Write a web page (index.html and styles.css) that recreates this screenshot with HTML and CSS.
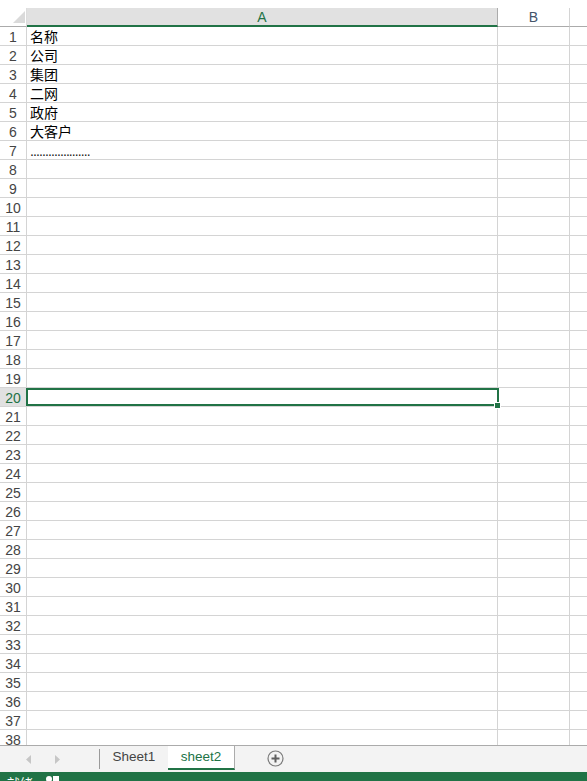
FILE: index.html
```html
<!DOCTYPE html>
<html lang="zh">
<head>
<meta charset="utf-8">
<title>sheet2</title>
<link rel="stylesheet" href="styles.css">
</head>
<body>
<div class="app">
  <div class="sheet">
    <div class="row head">
      <div class="rh corner"><svg class="tri" width="12" height="12" viewBox="0 0 12 12"><polygon points="12,0 12,12 0,12" fill="#dadada"/></svg></div>
      <div class="c a">A</div>
      <div class="c b">B</div>
      <div class="c r"></div>
    </div>
    <div class="row"><div class="rh">1</div><div class="c a">名称</div><div class="c b"></div><div class="c r"></div></div>
    <div class="row"><div class="rh">2</div><div class="c a">公司</div><div class="c b"></div><div class="c r"></div></div>
    <div class="row"><div class="rh">3</div><div class="c a">集团</div><div class="c b"></div><div class="c r"></div></div>
    <div class="row"><div class="rh">4</div><div class="c a">二网</div><div class="c b"></div><div class="c r"></div></div>
    <div class="row"><div class="rh">5</div><div class="c a">政府</div><div class="c b"></div><div class="c r"></div></div>
    <div class="row"><div class="rh">6</div><div class="c a">大客户</div><div class="c b"></div><div class="c r"></div></div>
    <div class="row"><div class="rh">7</div><div class="c a"><span class="dots">....................</span></div><div class="c b"></div><div class="c r"></div></div>
    <div class="row"><div class="rh">8</div><div class="c a"></div><div class="c b"></div><div class="c r"></div></div>
    <div class="row"><div class="rh">9</div><div class="c a"></div><div class="c b"></div><div class="c r"></div></div>
    <div class="row"><div class="rh">10</div><div class="c a"></div><div class="c b"></div><div class="c r"></div></div>
    <div class="row"><div class="rh">11</div><div class="c a"></div><div class="c b"></div><div class="c r"></div></div>
    <div class="row"><div class="rh">12</div><div class="c a"></div><div class="c b"></div><div class="c r"></div></div>
    <div class="row"><div class="rh">13</div><div class="c a"></div><div class="c b"></div><div class="c r"></div></div>
    <div class="row"><div class="rh">14</div><div class="c a"></div><div class="c b"></div><div class="c r"></div></div>
    <div class="row"><div class="rh">15</div><div class="c a"></div><div class="c b"></div><div class="c r"></div></div>
    <div class="row"><div class="rh">16</div><div class="c a"></div><div class="c b"></div><div class="c r"></div></div>
    <div class="row"><div class="rh">17</div><div class="c a"></div><div class="c b"></div><div class="c r"></div></div>
    <div class="row"><div class="rh">18</div><div class="c a"></div><div class="c b"></div><div class="c r"></div></div>
    <div class="row"><div class="rh">19</div><div class="c a"></div><div class="c b"></div><div class="c r"></div></div>
    <div class="row"><div class="rh active">20</div><div class="c a"></div><div class="c b"></div><div class="c r"></div></div>
    <div class="row"><div class="rh">21</div><div class="c a"></div><div class="c b"></div><div class="c r"></div></div>
    <div class="row"><div class="rh">22</div><div class="c a"></div><div class="c b"></div><div class="c r"></div></div>
    <div class="row"><div class="rh">23</div><div class="c a"></div><div class="c b"></div><div class="c r"></div></div>
    <div class="row"><div class="rh">24</div><div class="c a"></div><div class="c b"></div><div class="c r"></div></div>
    <div class="row"><div class="rh">25</div><div class="c a"></div><div class="c b"></div><div class="c r"></div></div>
    <div class="row"><div class="rh">26</div><div class="c a"></div><div class="c b"></div><div class="c r"></div></div>
    <div class="row"><div class="rh">27</div><div class="c a"></div><div class="c b"></div><div class="c r"></div></div>
    <div class="row"><div class="rh">28</div><div class="c a"></div><div class="c b"></div><div class="c r"></div></div>
    <div class="row"><div class="rh">29</div><div class="c a"></div><div class="c b"></div><div class="c r"></div></div>
    <div class="row"><div class="rh">30</div><div class="c a"></div><div class="c b"></div><div class="c r"></div></div>
    <div class="row"><div class="rh">31</div><div class="c a"></div><div class="c b"></div><div class="c r"></div></div>
    <div class="row"><div class="rh">32</div><div class="c a"></div><div class="c b"></div><div class="c r"></div></div>
    <div class="row"><div class="rh">33</div><div class="c a"></div><div class="c b"></div><div class="c r"></div></div>
    <div class="row"><div class="rh">34</div><div class="c a"></div><div class="c b"></div><div class="c r"></div></div>
    <div class="row"><div class="rh">35</div><div class="c a"></div><div class="c b"></div><div class="c r"></div></div>
    <div class="row"><div class="rh">36</div><div class="c a"></div><div class="c b"></div><div class="c r"></div></div>
    <div class="row"><div class="rh">37</div><div class="c a"></div><div class="c b"></div><div class="c r"></div></div>
    <div class="row"><div class="rh">38</div><div class="c a"></div><div class="c b"></div><div class="c r"></div></div>
    <div class="selection"><span class="handle"></span></div>
  </div>
  <div class="tabs">
    <div class="nav">
      <svg class="arrow" width="5" height="9" viewBox="0 0 5 9"><polygon points="5,0 5,9 0,4.5" fill="#c6c6c6"/></svg>
      <svg class="arrow" width="5" height="9" viewBox="0 0 5 9"><polygon points="0,0 0,9 5,4.5" fill="#c6c6c6"/></svg>
    </div>
    <div class="sep"></div>
    <div class="tab">Sheet1</div>
    <div class="tab current">sheet2</div>
    <div class="add">
      <svg width="17" height="17" viewBox="0 0 17 17"><circle cx="8.5" cy="8.5" r="7.5" fill="none" stroke="#7a7a7a" stroke-width="1.2"/><path d="M8.5 4.5v8M4.5 8.5h8" stroke="#5f5f5f" stroke-width="2"/></svg>
    </div>
  </div>
  <div class="status">
    <span class="ready">就绪</span>
    <svg class="macro" width="14" height="14" viewBox="0 0 14 14"><circle cx="3" cy="4" r="3" fill="#fff"/><rect x="7" y="1" width="6" height="10" fill="#fff"/></svg>
  </div>
</div>
</body>
</html>
```

FILE: styles.css
```css
html, body {
  margin: 0;
  padding: 0;
  background: #fff;
  overflow: hidden;
}

.app {
  width: 587px;
  height: 781px;
  display: flex;
  flex-direction: column;
  overflow: hidden;
  font-family: "Liberation Sans", Arial, "Noto Sans CJK SC", sans-serif;
}

.sheet {
  position: relative;
  flex: none;
  height: 745px;
  padding-top: 8px;
  box-sizing: border-box;
  overflow: hidden;
}

.row {
  display: flex;
  height: 19px;
}

.rh,
.c {
  box-sizing: border-box;
  height: 19px;
  border-bottom: 1px solid #d4d4d4;
  border-right: 1px solid #d4d4d4;
}

.rh {
  flex: none;
  width: 27px;
  text-align: center;
  font-size: 14px;
  line-height: 18px;
  padding-top: 1px;
  color: #444;
}

.rh.active {
  background: #e1e1e1;
  color: #217346;
}

.c.a {
  flex: none;
  width: 471px;
  padding-left: 3px;
  font-family: "Noto Sans CJK SC", sans-serif;
  font-size: 14px;
  line-height: 17px;
  padding-top: 1px;
  color: #000;
  white-space: nowrap;
}

.c.b {
  flex: none;
  width: 72px;
}

.c.r {
  flex: 1;
  border-right: none;
}

.dots {
  font-family: "Liberation Sans", sans-serif;
  letter-spacing: -0.9px;
  color: #222;
}

.head .rh,
.head .c {
  border-bottom: 1px solid #ababab;
}

.corner {
  position: relative;
  border-right-color: #dcdcdc;
}

.tri {
  position: absolute;
  left: 13px;
  top: 3px;
}

.head .c.a {
  background: #e1e1e1;
  border-bottom: 2px solid #217346;
  border-right-color: #ababab;
  text-align: center;
  font-family: "Liberation Sans", sans-serif;
  color: #217346;
  padding-left: 0;
  padding-top: 1px;
  line-height: 16px;
}

.head .c.b {
  text-align: center;
  color: #44546a;
  font-size: 14px;
  line-height: 16px;
  padding-top: 1px;
}

.selection {
  position: absolute;
  left: 26px;
  top: 388px;
  width: 473px;
  height: 18px;
  box-sizing: border-box;
  border: 2px solid #217346;
}

.handle {
  position: absolute;
  right: -4px;
  bottom: -5px;
  width: 5px;
  height: 5px;
  background: #217346;
  border: 1px solid #fff;
}

.tabs {
  flex: none;
  height: 27px;
  box-sizing: border-box;
  border-top: 1px solid #ababab;
  background: #f3f3f3;
  display: flex;
  align-items: flex-start;
  font-family: "Liberation Sans", sans-serif;
  font-size: 13.5px;
}

.nav {
  width: 99px;
  height: 26px;
  display: flex;
  align-items: center;
  gap: 24px;
  padding-left: 26px;
  box-sizing: border-box;
}

.sep {
  width: 1px;
  height: 20px;
  margin-top: 3px;
  background: #9a9a9a;
}

.tab {
  width: 68px;
  height: 24px;
  box-sizing: border-box;
  text-align: center;
  line-height: 22px;
  color: #444;
}

.tab.current {
  width: 67px;
  background: #fff;
  color: #217346;
  border-bottom: 2px solid #217346;
  border-right: 1px solid #ababab;
}

.add {
  margin-left: 32px;
  margin-top: 4px;
  height: 17px;
}

.status {
  flex: none;
  height: 24px;
  background: #217346;
  display: flex;
  align-items: flex-start;
  padding-left: 7px;
  padding-top: 2px;
  box-sizing: border-box;
  gap: 13px;
}

.ready {
  color: #fff;
  font-family: "Noto Sans CJK SC", sans-serif;
  font-size: 13px;
  line-height: 18px;
}

.macro {
  margin-top: 1px;
}
```
